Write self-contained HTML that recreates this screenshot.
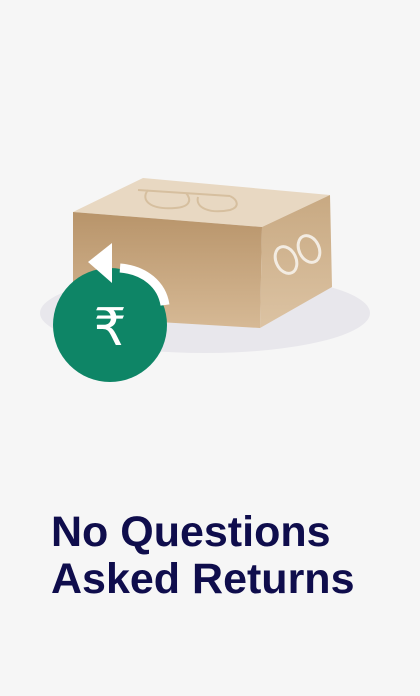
<!DOCTYPE html>
<html><head><meta charset="utf-8"><style>
html,body{margin:0;padding:0;background:#f6f6f6;width:420px;height:696px;overflow:hidden}
.t{position:absolute;left:51px;top:509px;font-family:"Liberation Sans",sans-serif;font-weight:bold;font-size:43px;line-height:47px;color:#0f0d4c;letter-spacing:0}
</style></head><body>
<svg width="420" height="696" style="position:absolute;left:0;top:0">
<defs>
<linearGradient id="f" x1="0" y1="0" x2="0" y2="1"><stop offset="0" stop-color="#b8946a"/><stop offset="1" stop-color="#d6b995"/></linearGradient>
<linearGradient id="r" x1="0" y1="0" x2="0" y2="1"><stop offset="0" stop-color="#c8a982"/><stop offset="1" stop-color="#dcc3a3"/></linearGradient>
</defs>
<ellipse cx="205" cy="313" rx="165" ry="40" fill="#e8e7ec"/>
<polygon points="73,212 143,178 330,195 262,227" fill="#e8d8c2"/>
<polygon points="73,212 262,227 260,328 73,317" fill="url(#f)"/>
<polygon points="262,227 330,195 332,287 260,328" fill="url(#r)"/>
<g fill="none" stroke="#d6bf9f" stroke-width="2">
<path d="M138,190 L230,196 M148,190 C140,200 150,210 175,208 C190,207 192,200 186,193 M198,197 C195,208 210,214 230,210 C240,207 238,200 230,196"/>
</g>
<g fill="none" stroke="#f3ece2" stroke-width="3">
<ellipse cx="286" cy="260" rx="10" ry="14" transform="rotate(-25 286 260)"/>
<ellipse cx="309" cy="249" rx="10" ry="14" transform="rotate(-25 309 249)"/>
</g>
<circle cx="110" cy="325" r="57" fill="#0e8566"/>
<path d="M120,268 C145,270 162,285 165,305" fill="none" stroke="#fff" stroke-width="9"/>
<polygon points="88,262 112,243 112,283" fill="#fff"/>
<text x="110" y="345" text-anchor="middle" font-family="DejaVu Sans,sans-serif" font-size="52" fill="#fff">₹</text>
</svg>
<div class="t">No Questions<br>Asked Returns</div>
</body></html>
